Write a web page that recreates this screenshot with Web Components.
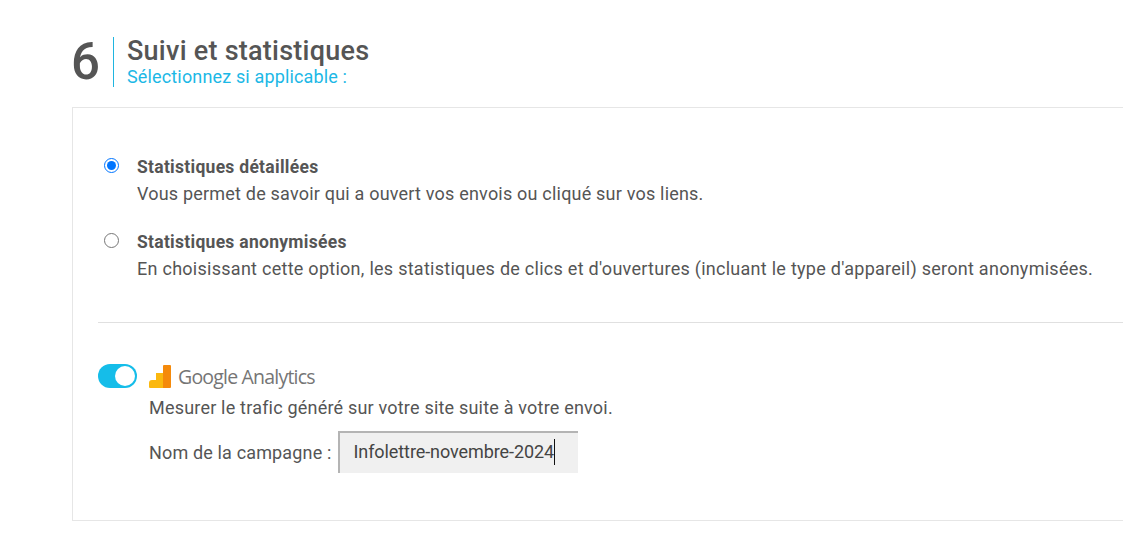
<!DOCTYPE html>
<html lang="fr">
<head>
<meta charset="utf-8">
<title>Suivi et statistiques</title>
<style>
  html, body { margin: 0; padding: 0; background: #fff; overflow: hidden; }
  body { font-family: Roboto, "Liberation Sans", sans-serif; color: #555; width: 1123px; height: 535px; }
</style>
</head>
<body>
<step-section step="6" heading="Suivi et statistiques" hint="Sélectionnez si applicable :">
  <stat-option checked style="--track: 0.2px" label="Statistiques détaillées">Vous permet de savoir qui a ouvert vos envois ou cliqué sur vos liens.</stat-option>
  <stat-option style="--track: 0.27px" label="Statistiques anonymisées">En choisissant cette option, les statistiques de clics et d'ouvertures (incluant le type d'appareil) seront anonymisées.</stat-option>
  <analytics-block campaign="Infolettre-novembre-2024"></analytics-block>
</step-section>

<script>
class StepSection extends HTMLElement {
  constructor() {
    super();
    this.attachShadow({ mode: 'open' });
    this.shadowRoot.innerHTML = `
      <style>
        :host { display: block; padding: 37px 0 0 72px; }
        .head { display: flex; align-items: center; height: 50px; }
        .num { font-size: 51px; font-weight: 500; color: #555; width: 42px; margin-left: -1px; line-height: 50px; flex: none; }
        .titles { border-left: 1px solid #1fb5e0; height: 50px; padding-left: 13px; box-sizing: border-box; }
        h2 { margin: 0; font-size: 27px; font-weight: 500; letter-spacing: 0.25px; line-height: 28px; color: #555; }
        p { margin: 1px 0 0; font-size: 18px; letter-spacing: 0.15px; line-height: 21px; color: #1cb8e6; }
        .panel { margin-top: 20px; width: 1100px; height: 414px; box-sizing: border-box; border: 1px solid #e6e6e6; padding: 46px 0 0 25px; }
      </style>
      <div class="head">
        <div class="num">${this.getAttribute('step')}</div>
        <div class="titles">
          <h2>${this.getAttribute('heading')}</h2>
          <p>${this.getAttribute('hint')}</p>
        </div>
      </div>
      <div class="panel"><slot></slot></div>
    `;
  }
}

class StatOption extends HTMLElement {
  constructor() {
    super();
    this.attachShadow({ mode: 'open' });
    const checked = this.hasAttribute('checked');
    this.shadowRoot.innerHTML = `
      <style>
        :host { display: flex; margin: 0 0 24px 0; font-size: 18px; letter-spacing: var(--track, 0.2px); line-height: 26px; color: #555; }
        :host([checked]) { margin-bottom: 22px; }
        .radio { width: 15px; height: 15px; margin: 4px 18px 0 6px; flex: none; appearance: auto; }
        b { display: block; font-weight: 700; font-size: 17.5px; letter-spacing: 0.28px; line-height: 27px; }
      </style>
      <input class="radio" type="radio" name="stats" ${checked ? 'checked' : ''}>
      <div><b>${this.getAttribute('label')}</b><slot></slot></div>
    `;
  }
}

class ToggleSwitch extends HTMLElement {
  constructor() {
    super();
    this.attachShadow({ mode: 'open' });
    this.shadowRoot.innerHTML = `
      <style>
        :host { display: block; width: 39px; height: 24px; box-sizing: border-box; border-radius: 12px; background: #15bde9; position: relative; }
        i { position: absolute; top: 2px; right: 2px; width: 20px; height: 20px; border-radius: 50%; background: #fff; }
      </style>
      <i></i>
    `;
  }
}

class AnalyticsBlock extends HTMLElement {
  constructor() {
    super();
    this.attachShadow({ mode: 'open' });
    this.shadowRoot.innerHTML = `
      <style>
        :host { display: block; border-top: 1px solid #e0e0e0; margin-top: 40px; padding-top: 40px; font-size: 18px; letter-spacing: 0.2px; color: #555; }
        .top { display: flex; align-items: center; height: 26px; }
        toggle-switch { margin-right: 12px; }
        svg { display: block; margin: 1px 6px 0 0; }
        .brand { font-family: "Open Sans", sans-serif; font-size: 19.5px; letter-spacing: -0.8px; color: #757575; }
        .body { padding-left: 51px; }
        .desc { margin-top: 6px; line-height: 26px; }
        .row { display: flex; align-items: center; margin-top: 10px; }
        label { margin-right: 7px; letter-spacing: 0.15px; }
        .field { width: 240px; height: 42px; box-sizing: border-box; background: #f0f0f0; border-top: 2px solid #b4b4b4; border-left: 2px solid #b4b4b4; padding-left: 13px; line-height: 38px; color: #444; white-space: nowrap; letter-spacing: -0.08px; }
        .caret { display: inline-block; width: 1px; height: 26px; background: #111; vertical-align: middle; margin-top: -2px; }
      </style>
      <div class="top">
        <toggle-switch></toggle-switch>
        <svg width="23" height="23" viewBox="0 0 23 23">
          <path d="M0 18a3 3 0 0 1 3-3h4v8H1a1 1 0 0 1-1-1z" fill="#fbb80f"/>
          <path d="M7 8h7v15H7z" fill="#fbb80f"/>
          <path d="M14 1a1 1 0 0 1 1-1h6a1 1 0 0 1 1 1v21a1 1 0 0 1-1 1h-7z" fill="#f58a0b"/>
        </svg>
        <span class="brand">Google Analytics</span>
      </div>
      <div class="body">
        <div class="desc">Mesurer le trafic généré sur votre site suite à votre envoi.</div>
        <div class="row">
          <label>Nom de la campagne :</label>
          <div class="field">${this.getAttribute('campaign')}<span class="caret"></span></div>
        </div>
      </div>
    `;
  }
}

customElements.define('step-section', StepSection);
customElements.define('stat-option', StatOption);
customElements.define('toggle-switch', ToggleSwitch);
customElements.define('analytics-block', AnalyticsBlock);
</script>
</body>
</html>
